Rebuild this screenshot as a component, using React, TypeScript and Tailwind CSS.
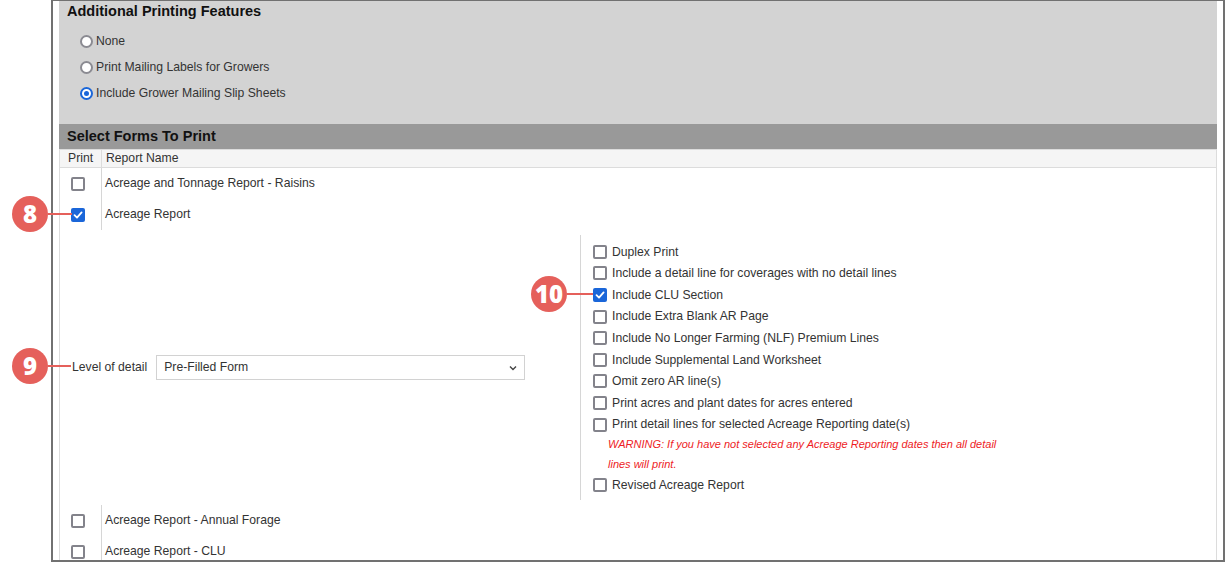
import type { ReactNode } from "react";

const font = { fontFamily: '"Liberation Sans", Arial, sans-serif' };

function Radio({ checked }: { checked?: boolean }) {
  return checked ? (
    <span className="flex h-[13px] w-[13px] shrink-0 items-center justify-center rounded-full border-2 border-[#1a66d9] bg-white">
      <span className="h-[5px] w-[5px] rounded-full bg-[#1a66d9]" />
    </span>
  ) : (
    <span className="h-[13px] w-[13px] shrink-0 rounded-full border-2 border-[#8b8b92] bg-white" />
  );
}

function Check({ checked }: { checked?: boolean }) {
  return checked ? (
    <span className="flex h-[14px] w-[14px] shrink-0 items-center justify-center rounded-[2px] bg-[#1a66d9]">
      <svg width="10" height="10" viewBox="0 0 10 10" fill="none">
        <path d="M1.5 5.2 4 7.6 8.6 2.4" stroke="white" strokeWidth="1.8" strokeLinecap="round" strokeLinejoin="round" />
      </svg>
    </span>
  ) : (
    <span className="h-[14px] w-[14px] shrink-0 rounded-[2px] border-2 border-[#83838b] bg-white" />
  );
}

function Marker({ n, className }: { n: string; className: string }) {
  return (
    <div className={`absolute flex items-center ${className}`}>
      <span
        className="flex h-[36px] w-[36px] items-center justify-center rounded-full bg-[#e5605b] text-[24px] font-extrabold leading-none text-white"
        style={{ fontFamily: '"Open Sans", sans-serif' }}
      >
        {n}
      </span>
      <span className="h-[1.5px] flex-1 bg-[#e5605b]" />
    </div>
  );
}

function ReportRow({ name, checked }: { name: string; checked?: boolean }) {
  return (
    <div className="flex h-[31px] items-stretch">
      <div className="flex w-[41px] items-center pl-[11px]">
        <Check checked={checked} />
      </div>
      <div className="flex items-center border-l border-[#d6d6d6] pl-[3px]">{name}</div>
    </div>
  );
}

function Option({ children, checked }: { children: ReactNode; checked?: boolean }) {
  return (
    <div className="flex h-[21.6px] items-center gap-[5px]">
      <Check checked={checked} />
      <span>{children}</span>
    </div>
  );
}

export default function App() {
  const options = [
    "Duplex Print",
    "Include a detail line for coverages with no detail lines",
    "Include CLU Section",
    "Include Extra Blank AR Page",
    "Include No Longer Farming (NLF) Premium Lines",
    "Include Supplemental Land Worksheet",
    "Omit zero AR line(s)",
    "Print acres and plant dates for acres entered",
    "Print detail lines for selected Acreage Reporting date(s)",
  ];

  return (
    <div className="relative h-[562px] w-[1225px] overflow-hidden bg-white text-[12.2px] text-[#333]" style={font}>
      <div className="ml-[51px] h-[562px] overflow-hidden border-x-2 border-t border-b-2 border-[#717171] px-[6px]">
        {/* Additional printing features */}
        <div className="h-[123px] bg-[#d3d3d3] pl-[8px] pt-[1px]">
          <div className="h-[18px] text-[14.5px] font-bold leading-[18px] text-[#111]">Additional Printing Features</div>
          <div className="mt-[8px] pl-[13px]">
            <div className="flex h-[26px] items-center gap-[3px]">
              <Radio />
              <span>None</span>
            </div>
            <div className="flex h-[26px] items-center gap-[3px]">
              <Radio />
              <span>Print Mailing Labels for Growers</span>
            </div>
            <div className="flex h-[26px] items-center gap-[3px]">
              <Radio checked />
              <span>Include Grower Mailing Slip Sheets</span>
            </div>
          </div>
        </div>

        <div className="flex h-[25px] items-center bg-[#999999] pl-[8px] text-[14.5px] font-bold text-[#111]">
          Select Forms To Print
        </div>

        {/* Forms table */}
        <div className="border-x border-t border-[#dcdcdc]">
          <div className="flex h-[18px] items-stretch border-b border-[#dcdcdc] bg-[#f5f5f5]">
            <div className="flex w-[41px] items-center pl-[8px]">Print</div>
            <div className="flex items-center border-l border-[#dcdcdc] pl-[4px]">Report Name</div>
          </div>

          <ReportRow name="Acreage and Tonnage Report - Raisins" />
          <ReportRow name="Acreage Report" checked />

          <div className="flex h-[275px] py-[5px]">
            <div className="flex w-[520px] items-center gap-[9px] pl-[12px]">
              <span>Level of detail</span>
              <div className="flex h-[25px] w-[369px] items-center justify-between border border-[#d2d2d2] bg-white pl-[7px] pr-[6px]">
                <span>Pre-Filled Form</span>
                <svg width="10" height="10" viewBox="0 0 10 10" fill="none">
                  <path d="M2 3.5 5 6.5 8 3.5" stroke="#444" strokeWidth="1.4" />
                </svg>
              </div>
            </div>
            <div className="border-l border-[#d6d6d6] pl-[12px] pt-[6px]">
              {options.map((o) => (
                <Option key={o} checked={o === "Include CLU Section"}>
                  {o}
                </Option>
              ))}
              <p className="w-[412px] pl-[15px] text-[11px] italic leading-[19.5px] text-[#ee1c25]">
                WARNING: If you have not selected any Acreage Reporting dates then all detail lines will print.
              </p>
              <Option>Revised Acreage Report</Option>
            </div>
          </div>

          <ReportRow name="Acreage Report - Annual Forage" />
          <ReportRow name="Acreage Report - CLU" />
        </div>
      </div>

      {/* callouts */}
      <Marker n="8" className="left-[12px] top-[196px] w-[60px]" />
      <Marker n="9" className="left-[12px] top-[348px] w-[59px]" />
      <Marker n="10" className="left-[531px] top-[276px] w-[62px]" />
    </div>
  );
}
